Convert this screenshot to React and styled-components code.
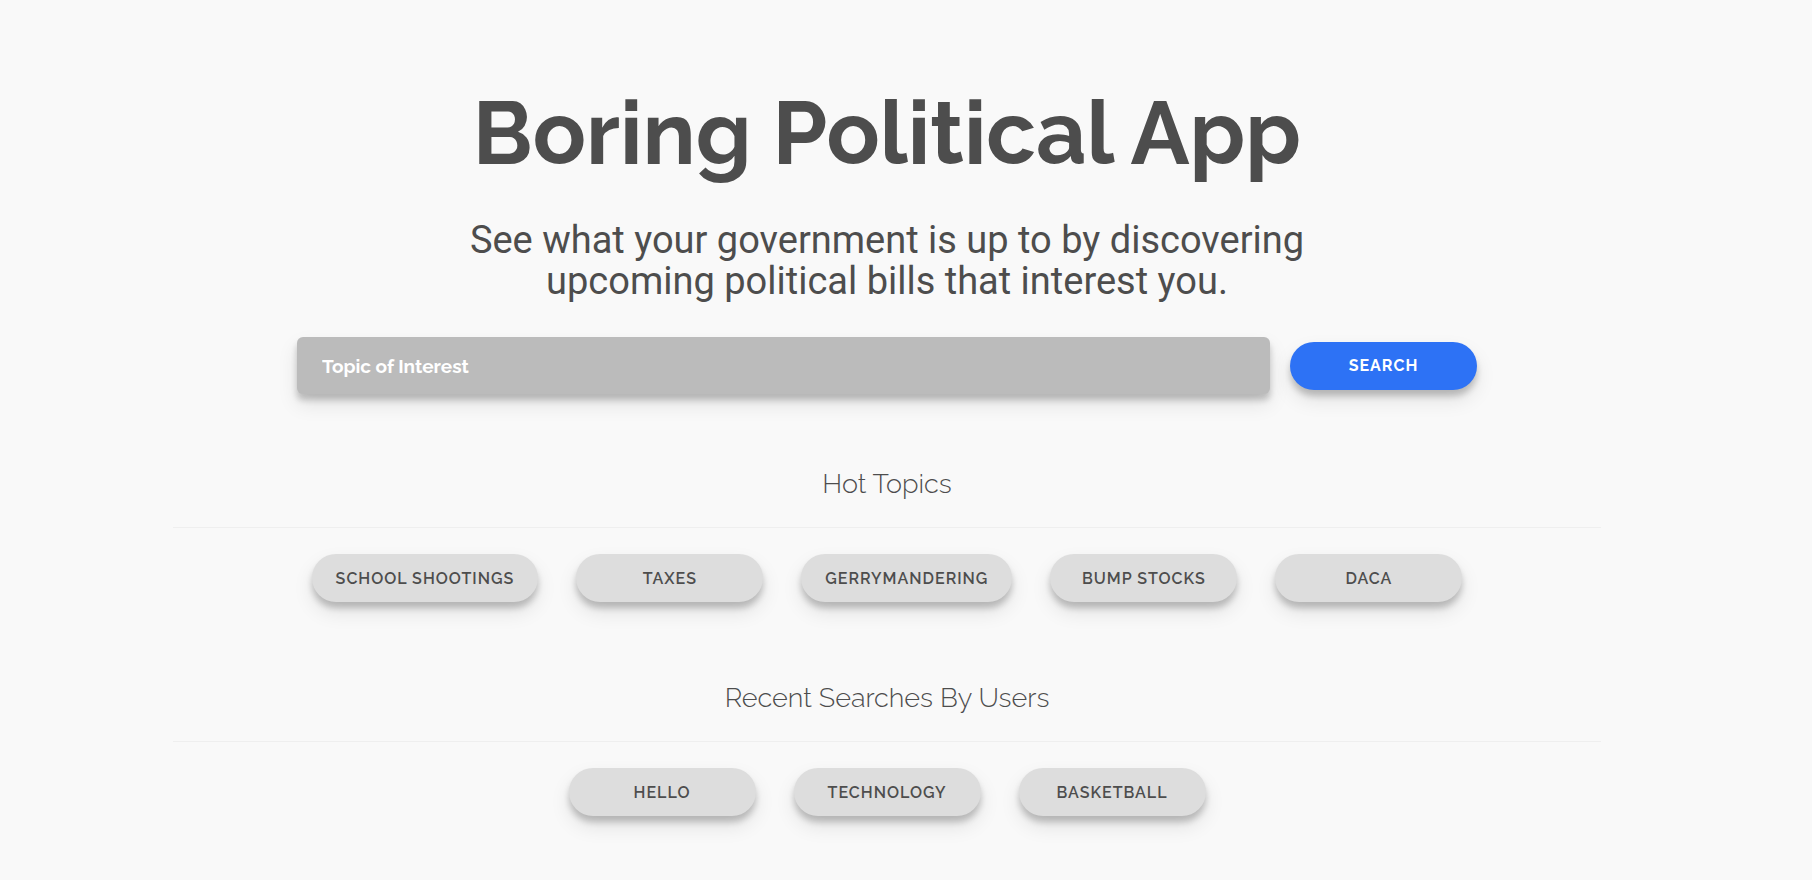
import React from 'react';
import styled, { createGlobalStyle } from 'styled-components';

const ink = '#4d4d4d';
const display = "Raleway, Lato, 'Liberation Sans', sans-serif";
const shadow = '0 6px 6px rgba(0, 0, 0, 0.2), 0 10px 20px rgba(0, 0, 0, 0.1)';

const GlobalStyle = createGlobalStyle`
  *, *::before, *::after { box-sizing: border-box; }
  body {
    margin: 0;
    background: #f9f9f9;
    color: ${ink};
    font-family: ${display};
  }
`;

const Page = styled.main`
  display: flex;
  flex-direction: column;
  align-items: center;
  padding: 81px 38px 60px 0;
`;

const Title = styled.h1`
  margin: 0;
  font-size: 88px;
  font-weight: 700;
  line-height: 104px;
  text-align: center;
`;

const Tagline = styled.p`
  max-width: 900px;
  margin: 35px 0 0;
  font-family: Roboto, sans-serif;
  font-size: 38px;
  line-height: 41px;
  text-align: center;
`;

const SearchForm = styled.form`
  display: flex;
  align-items: center;
  gap: 20px;
  width: 100%;
  max-width: 1180px;
  margin-top: 35px;
`;

const SearchInput = styled.input`
  flex: 1;
  min-width: 0;
  height: 57px;
  padding: 0 25px;
  border: 0;
  border-radius: 6px;
  background: #bbb;
  box-shadow: ${shadow};
  color: #fff;
  font-family: ${display};
  font-size: 19px;
  font-weight: 700;

  &::placeholder {
    color: #fff;
    opacity: 1;
  }
`;

const Pill = styled.button`
  min-width: 187px;
  height: 48px;
  padding: 0 24px;
  border: 0;
  border-radius: 24px;
  background: ${(p) => (p.$primary ? '#2d72f5' : '#ddd')};
  box-shadow: ${shadow};
  color: ${(p) => (p.$primary ? '#fff' : ink)};
  font-family: ${display};
  font-size: 16px;
  font-weight: ${(p) => (p.$primary ? 700 : 600)};
  letter-spacing: 1px;
  text-transform: uppercase;
  cursor: pointer;
`;

const Topics = styled.div`
  display: flex;
  flex-direction: column;
  gap: 78px;
  width: 80.5%;
  margin-top: 72px;
`;

const SectionTitle = styled.h2`
  margin: 0;
  padding-bottom: 25px;
  border-bottom: 1px solid #efefef;
  font-size: 27px;
  font-weight: 300;
  line-height: 36px;
  text-align: center;
`;

const PillRow = styled.div`
  display: flex;
  flex-wrap: wrap;
  justify-content: center;
  gap: 24px 38px;
  margin-top: 26px;
`;

const sections = [
  {
    title: 'Hot Topics',
    topics: ['School Shootings', 'Taxes', 'Gerrymandering', 'Bump Stocks', 'DACA'],
  },
  {
    title: 'Recent Searches By Users',
    topics: ['Hello', 'Technology', 'Basketball'],
  },
];

export default function App() {
  return (
    <>
      <GlobalStyle />
      <Page>
        <Title>Boring Political App</Title>
        <Tagline>
          See what your government is up to by discovering upcoming political bills that interest you.
        </Tagline>
        <SearchForm role="search" onSubmit={(e) => e.preventDefault()}>
          <SearchInput type="text" aria-label="Topic of Interest" placeholder="Topic of Interest" />
          <Pill type="submit" $primary>Search</Pill>
        </SearchForm>
        <Topics>
          {sections.map(({ title, topics }) => (
            <section key={title}>
              <SectionTitle>{title}</SectionTitle>
              <PillRow>
                {topics.map((topic) => (
                  <Pill key={topic} type="button">{topic}</Pill>
                ))}
              </PillRow>
            </section>
          ))}
        </Topics>
      </Page>
    </>
  );
}
